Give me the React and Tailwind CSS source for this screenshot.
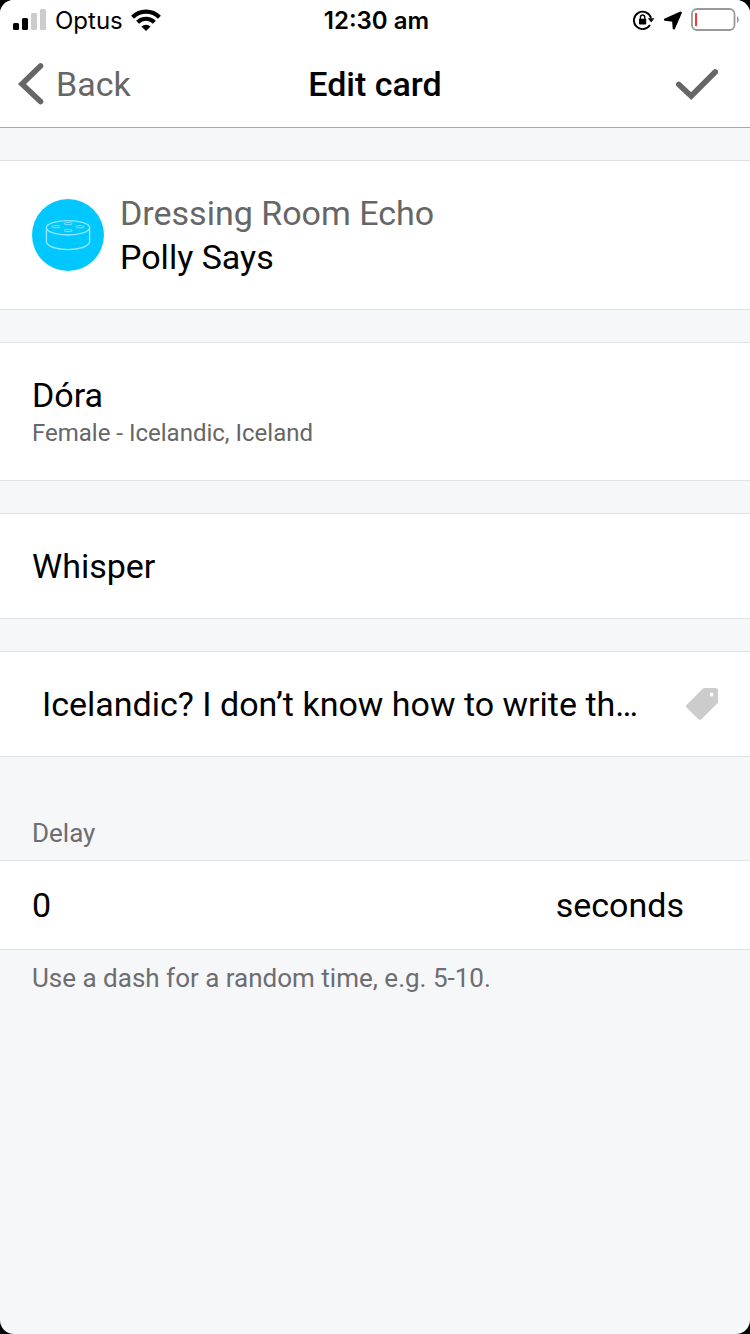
import React, { useState } from "react";

function SignalIcon() {
  return (
    <svg viewBox="0 0 34 22" className="h-[22px] w-[34px]" aria-hidden="true">
      <rect x="0" y="14" width="6" height="7" rx="1.5" fill="#000" />
      <rect x="9" y="9" width="6" height="12" rx="1.5" fill="#000" />
      <rect x="18" y="4" width="6" height="17" rx="1.5" fill="#ccc" />
      <rect x="27" y="0" width="6" height="21" rx="1.5" fill="#ccc" />
    </svg>
  );
}

function WifiIcon() {
  return (
    <svg viewBox="0 0 30 22" className="h-[22px] w-[30px]" fill="none" aria-hidden="true">
      <path d="M1.6 8.2 A18.8 18.8 0 0 1 28.4 8.2" stroke="#000" strokeWidth="4.2" />
      <path d="M6.6 13.2 A12 12 0 0 1 23.4 13.2" stroke="#000" strokeWidth="4.2" />
      <path d="M15 22 L10.4 17.6 A6.6 6.6 0 0 1 19.6 17.6 Z" fill="#000" />
    </svg>
  );
}

function RotationLockIcon() {
  return (
    <svg viewBox="0 0 22 20" className="h-5 w-[22px]" fill="none" aria-hidden="true">
      <path d="M17 15 A8.7 8.7 0 1 1 18 8" stroke="#000" strokeWidth="1.9" />
      <path d="M14.8 8.2 H21.4 L18.2 12.6 Z" fill="#000" />
      <rect x="6" y="8.8" width="7.2" height="5.8" rx="0.8" fill="#000" />
      <path d="M7.4 9 V7.2 a2.2 2.2 0 0 1 4.4 0 V9" stroke="#000" strokeWidth="1.4" />
    </svg>
  );
}

function LocationIcon() {
  return (
    <svg viewBox="0 0 20 20" className="h-5 w-5" aria-hidden="true">
      <path
        d="M17.6 2.2 L1.6 9.4 L1.8 10 L9.8 11 L10.4 18.6 L11.2 18.8 L18.2 2.8 Z"
        fill="#000"
        stroke="#000"
        strokeWidth="1.4"
        strokeLinejoin="round"
      />
    </svg>
  );
}

function BatteryIcon() {
  return (
    <svg viewBox="0 0 49 24" className="h-6 w-[49px]" fill="none" aria-hidden="true">
      <rect x="1" y="1" width="42.5" height="21" rx="5" stroke="#999" strokeWidth="1.8" />
      <rect x="4" y="5" width="2" height="13" rx="0.5" fill="#ff3330" />
      <path d="M46 8 Q47.8 9 47.8 11.5 Q47.8 14 46 15 Z" fill="#999" />
    </svg>
  );
}

function EchoIcon() {
  return (
    <svg viewBox="0 0 72 72" className="size-[72px] shrink-0" fill="none" aria-hidden="true">
      <circle cx="36" cy="36" r="36" fill="#00c8ff" />
      <g stroke="#8ee7ff" strokeWidth="1.4">
        <ellipse cx="36" cy="28.8" rx="21.6" ry="7.2" />
        <path d="M14.4 29 V43 C15.5 47.5 24.5 50.6 36 50.6 S56.5 47.5 57.6 43 V29" />
      </g>
      <g stroke="#8ee7ff" strokeWidth="0.8">
        <rect x="32.4" y="23.6" width="7.6" height="2" rx="1" />
        <rect x="20.2" y="26.8" width="7.6" height="2" rx="1" />
        <rect x="44.2" y="26.8" width="7.6" height="2" rx="1" />
        <rect x="32.4" y="30.6" width="7.6" height="2" rx="1" />
      </g>
    </svg>
  );
}

function TagIcon() {
  return (
    <svg viewBox="0 0 32 32" className="size-8" aria-hidden="true">
      <path
        fillRule="evenodd"
        d="M18.4 0 H29.2 Q32 0 32 2.8 V13.8 Q32 14.8 31.2 15.6 L15.4 31.3 Q13.9 32.6 12.4 31.3 L0.7 19.8 Q-0.7 18.2 0.7 16.7 L16.4 0.9 Q17.3 0 18.4 0 Z M25.6 4.6 a1.9 1.9 0 1 0 0 3.8 a1.9 1.9 0 1 0 0 -3.8 Z"
        fill="#ccc"
      />
    </svg>
  );
}

function Row({ className = "", children }) {
  return (
    <button
      type="button"
      className={`flex w-full items-center border-y border-[#dfe0e2] bg-white px-8 text-left ${className}`}
    >
      {children}
    </button>
  );
}

export default function App() {
  const [delay, setDelay] = useState("0");

  return (
    <div className="min-h-screen bg-black">
      <div className="flex min-h-screen flex-col overflow-hidden rounded-[14px] bg-[#f5f7f9] font-['Roboto',sans-serif] text-[34px] leading-10 text-black">
        <div className="grid h-10 grid-cols-[1fr_auto_1fr] items-center bg-white pr-[10px] pl-[13px] font-['Inter',sans-serif] text-2xl leading-7">
          <div className="flex items-center gap-2">
            <SignalIcon />
            <span className="pt-0.5">Optus</span>
            <WifiIcon />
          </div>
          <span className="pt-0.5 font-semibold">12:30 am</span>
          <div className="flex items-center justify-end gap-2">
            <RotationLockIcon />
            <LocationIcon />
            <BatteryIcon />
          </div>
        </div>

        <header className="grid h-[88px] grid-cols-[1fr_auto_1fr] items-center border-b border-[#a7a8aa] bg-white px-4">
          <button type="button" className="flex items-center gap-3 justify-self-start text-[#666]">
            <svg viewBox="0 0 28 44" className="h-11 w-7" fill="none" aria-hidden="true">
              <path d="M24.5 4 L6 22 L24.5 39.5" stroke="#666" strokeWidth="5.6" strokeLinecap="round" />
            </svg>
            <span>Back</span>
          </button>
          <h1 className="font-medium">Edit card</h1>
          <button type="button" aria-label="Save" className="mr-4 justify-self-end">
            <svg viewBox="0 0 42 32" className="h-8 w-[42px]" fill="none" aria-hidden="true">
              <path d="M2.8 16.5 L15.2 28 L39.2 4" stroke="#666" strokeWidth="5.6" strokeLinecap="round" />
            </svg>
          </button>
        </header>

        <main className="flex flex-col gap-8 pt-8">
          <Row className="h-[150px] gap-4">
            <EchoIcon />
            <span className="flex flex-col leading-11">
              <span className="text-[#666]">Dressing Room Echo</span>
              <span>Polly Says</span>
            </span>
          </Row>

          <Row className="h-[139px]">
            <span className="flex flex-col pt-[3px]">
              <span>Dóra</span>
              <span className="text-2xl leading-9 text-[#666]">Female - Icelandic, Iceland</span>
            </span>
          </Row>

          <Row className="h-[106px]">Whisper</Row>

          <Row className="h-[106px] justify-between">
            <span className="truncate pl-[10px]">Icelandic? I don’t know how to write th…</span>
            <TagIcon />
          </Row>

          <section className="pt-[26px]">
            <label htmlFor="delay" className="block px-8 pb-[9px] text-[26px] leading-9 text-[#6d6d72]">
              Delay
            </label>
            <div className="flex h-[90px] items-center justify-between border-y border-[#dfe0e2] bg-white pr-[66px] pl-8">
              <input
                id="delay"
                type="text"
                value={delay}
                onChange={(e) => setDelay(e.target.value)}
                aria-describedby="delay-hint"
                className="min-w-0 flex-1 bg-transparent outline-none"
              />
              <span>seconds</span>
            </div>
            <p id="delay-hint" className="px-8 pt-2.5 text-[26px] leading-9 text-[#6d6d72]">
              Use a dash for a random time, e.g. 5-10.
            </p>
          </section>
        </main>
      </div>
    </div>
  );
}
